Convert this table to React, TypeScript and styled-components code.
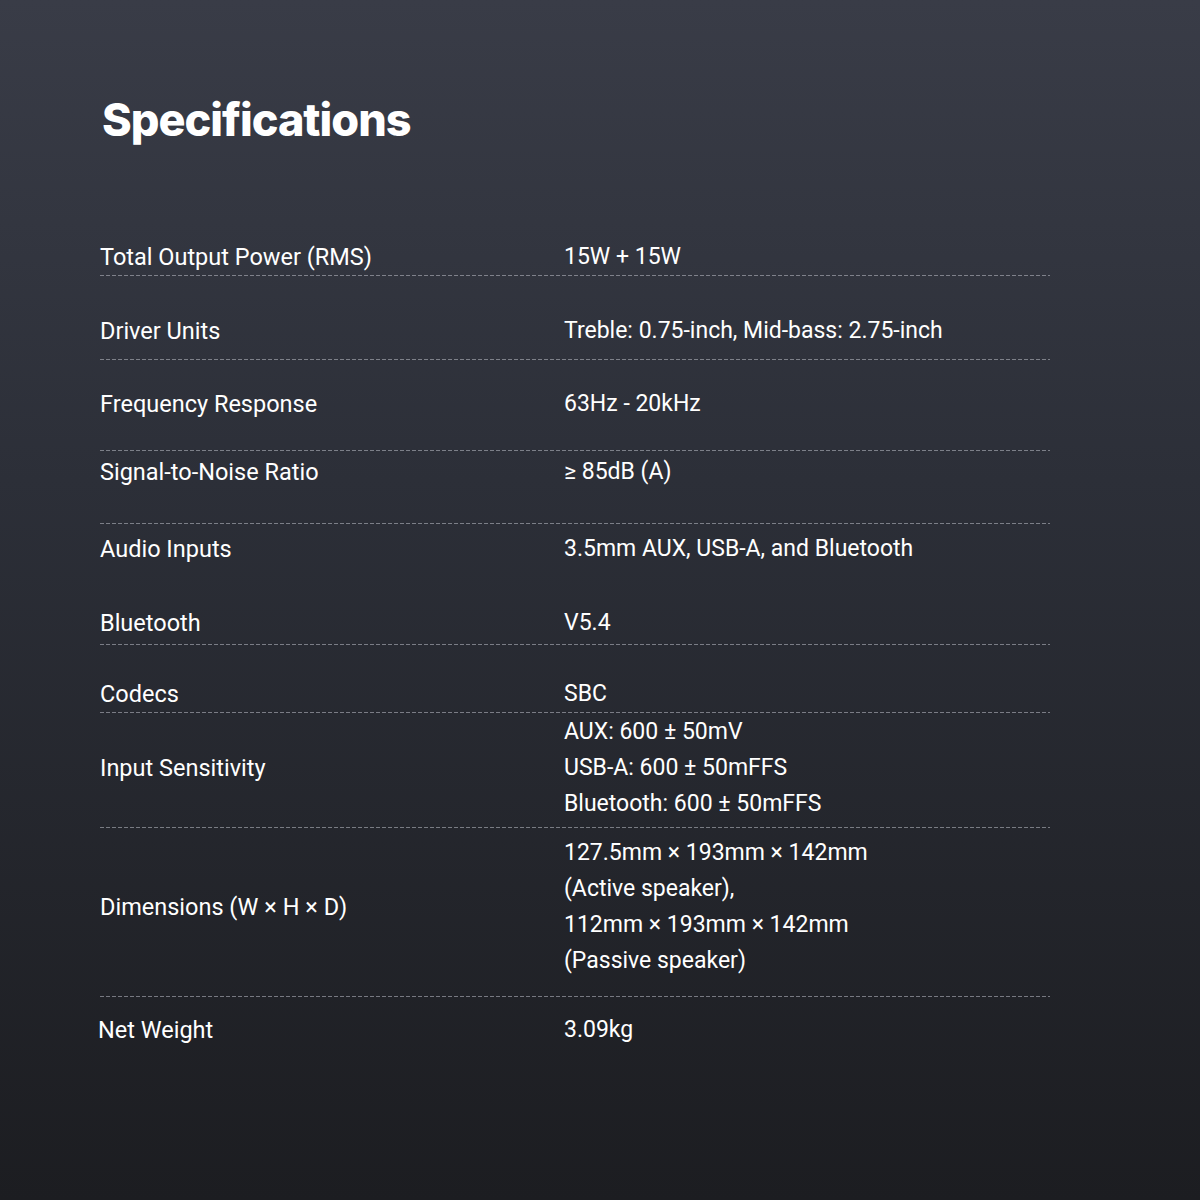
import React from "react";
import styled, { createGlobalStyle } from "styled-components";

const Global = createGlobalStyle`
  html, body { margin: 0; padding: 0; }
  body { background: #1c1d21; }
`;

const Page = styled.div`
  width: 1200px;
  height: 1200px;
  box-sizing: border-box;
  background: linear-gradient(180deg, #393c47 0%, #2c2f38 40%, #1c1d21 100%);
  padding: 92px 150px 0 100px;
  color: #ffffff;
  font-family: "Roboto", "Noto Sans", sans-serif;
`;

const Title = styled.h1`
  margin: 0 0 0 2px;
  font-family: "Inter", "Lato", sans-serif;
  font-weight: 800;
  font-size: 45px;
  line-height: 56px;
  letter-spacing: -1px;
`;

const Table = styled.div`
  margin-top: 91px;
  display: flex;
  flex-direction: column;
`;

const Row = styled.div<{ $pt: number; $pb: number; $line?: boolean }>`
  display: grid;
  grid-template-columns: 464px 1fr;
  align-items: center;
  padding-top: ${(p) => p.$pt}px;
  padding-bottom: ${(p) => p.$pb}px;
  ${(p) =>
    p.$line
      ? `background-image: linear-gradient(90deg, rgba(190,193,202,0.55) 0 4px, transparent 4px 6px);
         background-size: 6px 1px;
         background-repeat: repeat-x;
         background-position: left bottom;
         padding-bottom: ${p.$pb + 1}px;`
      : ""}
`;

const Label = styled.div<{ $shift?: number }>`
  font-size: 23.5px;
  line-height: 36px;
  margin-left: ${(p) => p.$shift ?? 0}px;
`;

const Values = styled.div`
  display: flex;
  flex-direction: column;
`;

const Value = styled.div`
  font-size: 23px;
  line-height: 36px;
`;

type Spec = {
  label: string;
  values: string[];
  pt: number;
  pb: number;
  line: boolean;
  shift?: number;
};

const specs: Spec[] = [
  { label: "Total Output Power (RMS)", values: ["15W + 15W"], pt: 0, pb: 0, line: true },
  { label: "Driver Units", values: ["Treble: 0.75-inch, Mid-bass: 2.75-inch"], pt: 37, pb: 10, line: true },
  { label: "Frequency Response", values: ["63Hz - 20kHz"], pt: 26, pb: 28, line: true },
  { label: "Signal-to-Noise Ratio", values: ["\u2265 85dB (A)"], pt: 3, pb: 33, line: true },
  { label: "Audio Inputs", values: ["3.5mm AUX, USB-A, and Bluetooth"], pt: 7, pb: 0, line: false },
  { label: "Bluetooth", values: ["V5.4"], pt: 38, pb: 3, line: true },
  { label: "Codecs", values: ["SBC"], pt: 31, pb: 0, line: true },
  {
    label: "Input Sensitivity",
    values: ["AUX: 600 \u00b1 50mV", "USB-A: 600 \u00b1 50mFFS", "Bluetooth: 600 \u00b1 50mFFS"],
    pt: 1,
    pb: 5,
    line: true,
  },
  {
    label: "Dimensions (W \u00d7 H \u00d7 D)",
    values: [
      "127.5mm \u00d7 193mm \u00d7 142mm",
      "(Active speaker),",
      "112mm \u00d7 193mm \u00d7 142mm",
      "(Passive speaker)",
    ],
    pt: 7,
    pb: 17,
    line: true,
  },
  { label: "Net Weight", values: ["3.09kg"], pt: 15, pb: 0, line: false, shift: -2 },
];

export default function App() {
  return (
    <>
      <Global />
      <Page>
        <Title>Specifications</Title>
        <Table>
          {specs.map((s) => (
            <Row key={s.label} $pt={s.pt} $pb={s.pb} $line={s.line}>
              <Label $shift={s.shift}>{s.label}</Label>
              <Values>
                {s.values.map((v) => (
                  <Value key={v}>{v}</Value>
                ))}
              </Values>
            </Row>
          ))}
        </Table>
      </Page>
    </>
  );
}
